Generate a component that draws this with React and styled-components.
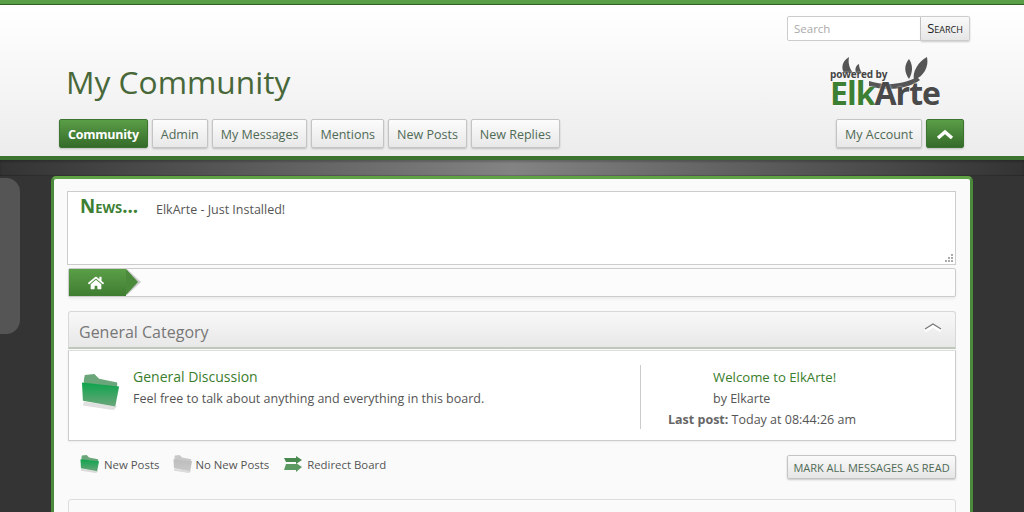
import React from 'react';
import styled, { createGlobalStyle } from 'styled-components';
import { FaHome } from 'react-icons/fa';

const GlobalStyle = createGlobalStyle`
  html, body {
    margin: 0;
    padding: 0;
    height: 100%;
    overflow: hidden;
    background: #333;
    font-family: "Open Sans", "Noto Sans", sans-serif;
    color: #555;
  }
  * { box-sizing: border-box; }
`;

const Page = styled.div`
  position: relative;
  height: 512px;
  overflow: hidden;
  background: #343434;
`;

const Header = styled.header`
  height: 160px;
  border-top: 4px solid #5a9e47;
  border-bottom: 4px solid #3d7330;
  background: linear-gradient(#fff, #fff 5px, #ececec);
  box-shadow: inset 0 1px 0 #2f5f22;
  padding: 12px 54px 0 59px;
  display: flex;
  flex-direction: column;
`;

const SearchRow = styled.div`
  display: flex;
  justify-content: flex-end;
`;

const SearchInput = styled.div`
  width: 134px;
  height: 25px;
  background: #fff;
  border: 1px solid #ccc;
  border-radius: 2px 0 0 2px;
  color: #aaa;
  font-size: 11.5px;
  line-height: 23px;
  padding-left: 6px;
`;

const SearchButton = styled.div`
  width: 49px;
  height: 25px;
  background: linear-gradient(#fafafa, #e6e6e6);
  border: 1px solid #ccc;
  border-left: none;
  border-radius: 0 2px 2px 0;
  box-shadow: 0 1px 2px rgba(0, 0, 0, 0.2);
  color: #222;
  font-size: 13px;
  font-variant: small-caps;
  line-height: 22px;
  text-align: center;
`;

const Brand = styled.div`
  display: flex;
  justify-content: space-between;
  align-items: flex-start;
  height: 78px;
  padding: 17px 29px 0 7px;
`;

const ForumName = styled.h1`
  margin: 0;
  font-size: 31.7px;
  line-height: 48px;
  font-weight: 400;
  color: #49683a;
`;

const Logo = styled.div`
  position: relative;
  width: 112px;
  height: 54px;
  margin-top: -2px;
`;

const Powered = styled.span`
  position: absolute;
  left: 1px;
  top: 12px;
  font-size: 10px;
  line-height: 12px;
  font-weight: 700;
  letter-spacing: -0.1px;
  color: #444;
  text-shadow: 0 0 2px #fff;
`;

const LogoWord = styled.span`
  position: absolute;
  left: 1px;
  top: 24px;
  font-size: 32px;
  line-height: 26px;
  font-weight: 700;
  letter-spacing: -1px;
  color: #4a4a4a;
  text-shadow: 0 0 2px #fff;
  white-space: nowrap;
`;

const Elk = styled.span`
  color: #3d7f33;
`;

const Antlers = styled.svg`
  position: absolute;
  left: 0;
  top: 0;
`;

const Nav = styled.nav`
  display: flex;
  justify-content: space-between;
  padding-right: 6px;
`;

const NavGroup = styled.div`
  display: flex;
  gap: 4px;
`;

const NavItem = styled.a`
  height: 29px;
  padding: 0 8px;
  border-radius: 2px;
  font-size: 12.5px;
  line-height: 29px;
  white-space: nowrap;
  color: ${(p) => (p.$active ? '#fff' : '#4f6a55')};
  font-weight: ${(p) => (p.$active ? 700 : 400)};
  letter-spacing: ${(p) => (p.$active ? '-0.25px' : '0')};
  border: 1px solid ${(p) => (p.$active ? '#3d7330' : '#c4c4c4')};
  background: ${(p) =>
    p.$active ? 'linear-gradient(#5a9e47, #356b2a)' : 'linear-gradient(#fcfcfc, #e8e8e8)'};
  box-shadow: 0 1px 2px rgba(0, 0, 0, 0.2);
`;

const ToggleButton = styled(NavItem)`
  width: 38px;
  padding: 0;
  display: flex;
  align-items: center;
  justify-content: center;
`;

const Glow = styled.div`
  height: 16px;
  background: linear-gradient(90deg, #333, #838383 50%, #333);
  box-shadow: inset 0 2px 2px rgba(0, 0, 0, 0.2), inset 0 -1px 1px rgba(0, 0, 0, 0.2);
`;

const SideTab = styled.div`
  position: absolute;
  left: 0;
  top: 178px;
  width: 20px;
  height: 156px;
  background: #555;
  border-radius: 0 14px 14px 0;
`;

const Wrapper = styled.main`
  margin: 0 51px;
  height: 340px;
  background: #fafafa;
  border: 3px solid #4a8a3a;
  border-top-color: #5fa345;
  border-bottom: none;
  border-radius: 5px 5px 0 0;
  padding: 12px 14px 0 13px;
`;

const NewsBox = styled.section`
  position: relative;
  height: 74px;
  background: #fff;
  border: 1px solid #ccc;
  display: flex;
  align-items: flex-start;
  padding: 4px 0 0 12px;
`;

const NewsTitle = styled.h2`
  margin: -1px 0 0;
  width: 76px;
  font-size: 18.7px;
  line-height: 22px;
  font-weight: 700;
  font-variant: small-caps;
  color: #3d7f33;
`;

const NewsText = styled.div`
  font-size: 12.5px;
  line-height: 20px;
  padding-top: 4px;
  color: #555;
`;

const Grip = styled.svg`
  position: absolute;
  right: 2px;
  bottom: 2px;
`;

const Breadcrumb = styled.div`
  height: 29px;
  margin: 3px 0 14px 1px;
  background: #fcfcfc;
  border: 1px solid #ccc;
  border-radius: 2px;
  box-shadow: 0 2px 3px rgba(0, 0, 0, 0.06);
  display: flex;
`;

const Crumb = styled.a`
  position: relative;
  width: 57px;
  height: 27px;
  background: linear-gradient(#5a9e47, #3f7d31);
  color: #fff;
  font-size: 16px;
  display: flex;
  align-items: center;
  justify-content: center;
  padding-right: 3px;

  &::before {
    content: '';
    position: absolute;
    left: 100%;
    top: 0;
    border-style: solid;
    border-width: 13.5px 0 13.5px 14px;
    border-color: transparent transparent transparent #ccc;
    margin-left: 1px;
  }

  &::after {
    content: '';
    position: absolute;
    left: 100%;
    top: 0;
    border-style: solid;
    border-width: 13.5px 0 13.5px 12px;
    border-color: transparent transparent transparent #4a8a3a;
  }
`;

const CategoryHeader = styled.div`
  height: 38px;
  margin-left: 1px;
  padding: 5px 13px 0 10px;
  background: linear-gradient(#f8f8f8, #e8e8e8);
  border: 1px solid #d8d8d8;
  border-bottom: 2px solid #c0c8bc;
  border-radius: 3px 3px 0 0;
  display: flex;
  align-items: center;
  justify-content: space-between;
  font-size: 16px;
  color: #777;
`;

const CollapseIcon = styled.svg`
  margin-top: -9px;
`;

const BoardRow = styled.div`
  height: 91px;
  margin: 1px 0 0 1px;
  background: #fff;
  border: 1px solid #ccc;
  border-top: 1px solid #ddd;
  box-shadow: 0 1px 2px rgba(0, 0, 0, 0.06);
  padding: 14px 0 0 12px;
  display: flex;
  align-items: flex-start;
`;

const BoardIcon = styled.div`
  width: 52px;
  flex: none;
  padding-top: 9px;
`;

const BoardInfo = styled.div`
  width: 507px;
  flex: none;
  padding-top: 1px;
`;

const BoardLink = styled.a`
  display: block;
  font-size: 14px;
  line-height: 22px;
  color: #3a7d2c;
`;

const BoardDesc = styled.p`
  margin: 0;
  font-size: 12.5px;
  line-height: 21px;
  color: #555;
`;

const LastPost = styled.div`
  flex: none;
  height: 64px;
  padding-left: 72px;
  border-left: 1px solid #ccc;
  font-size: 12.5px;
  line-height: 21px;
  color: #555;
`;

const PostTitle = styled.a`
  display: block;
  padding-top: 2px;
  font-size: 13.2px;
  line-height: 21px;
  color: #3a7d2c;
`;

const PostLine = styled.div`
  margin-left: ${(p) => (p.$outdent ? '-45px' : '0')};
  white-space: nowrap;
`;

const Strong = styled.strong`
  font-weight: 700;
  color: #666;
`;

const LegendBar = styled.div`
  display: flex;
  justify-content: space-between;
  align-items: flex-start;
  padding-left: 13px;
  height: 58px;
`;

const Legend = styled.div`
  display: flex;
  align-items: center;
  gap: 14px;
  height: 46px;
`;

const LegendItem = styled.span`
  display: flex;
  align-items: center;
  gap: ${(p) => (p.$tight ? '2px' : '4px')};
  font-size: 11.4px;
  color: #555;
  white-space: nowrap;
`;

const MarkButton = styled.a`
  margin-top: 14px;
  width: 169px;
  height: 24px;
  background: linear-gradient(#fafafa, #e6e6e6);
  border: 1px solid #c4c4c4;
  border-radius: 2px;
  box-shadow: 0 1px 2px rgba(0, 0, 0, 0.2);
  color: #4f6a55;
  font-size: 11px;
  line-height: 23px;
  text-align: center;
  white-space: nowrap;
`;

const NextPanel = styled.div`
  height: 30px;
  margin-left: 1px;
  background: #fafafa;
  border: 1px solid #ddd;
  border-radius: 3px 3px 0 0;
`;

function Folder({ width, color = '#0da44c', back = '#6aa67a' }) {
  const id = color.replace('#', 'f');
  return (
    <svg width={width} viewBox="0 0 42 38" style={{ display: 'block', flex: 'none' }}>
      <defs>
        <linearGradient id={id} x1="0" y1="0" x2="0" y2="1">
          <stop offset="0" stopColor={color} />
          <stop offset="1" stopColor={back} />
        </linearGradient>
      </defs>
      <path d="M2 33 L34 38 L38 34 L3 29 Z" fill="#000" opacity="0.12" />
      <path d="M3 6 L4 1 L14 0 L19 5 L38 9 L38 14 L3 10 Z" fill={back} />
      <path d="M1 9 L40 13 L36 34 L2 28 Z" fill={`url(#${id})`} />
    </svg>
  );
}

function RedirectIcon() {
  return (
    <svg width="20" height="17" viewBox="0 0 20 17" style={{ display: 'block' }}>
      <path d="M1 2 H13 V0 L19 4 L13 8 V6 H3 Z" fill="#4a8a50" />
      <path d="M3 8 H13 V7 L19 11 L13 16 V14 H1 Z" fill="#5d9a63" />
    </svg>
  );
}

function Chevron({ stroke = '#fff', width = 18, height = 10 }) {
  return (
    <svg width={width} height={height} viewBox="0 0 18 10">
      <path d="M2 9 L9 3 L16 9" fill="none" stroke={stroke} strokeWidth="3.4" />
    </svg>
  );
}

export default function App() {
  const links = ['Admin', 'My Messages', 'Mentions', 'New Posts', 'New Replies'];

  return (
    <Page>
      <GlobalStyle />
      <Header>
        <SearchRow>
          <SearchInput>Search</SearchInput>
          <SearchButton>Search</SearchButton>
        </SearchRow>
        <Brand>
          <ForumName>My Community</ForumName>
          <Logo>
            <Antlers width="112" height="54" viewBox="0 0 112 54">
              <path d="M20 1 C13 5 12 12 15 17 L24 17 C20 12 19 6 20 1 Z" fill="#555" />
              <path d="M30 8 C26 10 26 14 27 17 L33 17 C31 14 30 11 30 8 Z" fill="#555" />
              <path d="M98 1 C100 11 95 20 85 24 C83 16 89 6 98 1 Z" fill="#555" />
              <path d="M80 3 C75 9 75 16 80 23 C84 16 84 9 80 3 Z" fill="#555" />
              <path d="M40 25 C55 30 74 29 88 21 L91 24 C78 34 56 35 40 30 Z" fill="#555" />
            </Antlers>
            <Powered>powered by</Powered>
            <LogoWord>
              <Elk>Elk</Elk>Arte
            </LogoWord>
          </Logo>
        </Brand>
        <Nav>
          <NavGroup>
            <NavItem $active>Community</NavItem>
            {links.map((link) => (
              <NavItem key={link}>{link}</NavItem>
            ))}
          </NavGroup>
          <NavGroup>
            <NavItem>My Account</NavItem>
            <ToggleButton $active>
              <Chevron />
            </ToggleButton>
          </NavGroup>
        </Nav>
      </Header>
      <Glow />
      <SideTab />
      <Wrapper>
        <NewsBox>
          <NewsTitle>News...</NewsTitle>
          <NewsText>ElkArte - Just Installed!</NewsText>
          <Grip width="8" height="8" viewBox="0 0 8 8">
            <path d="M6 0h2v2H6zM3 3h2v2H3zM6 3h2v2H6zM0 6h2v2H0zM3 6h2v2H3zM6 6h2v2H6z" fill="#aaa" />
          </Grip>
        </NewsBox>
        <Breadcrumb>
          <Crumb>
            <FaHome />
          </Crumb>
        </Breadcrumb>
        <CategoryHeader>
          General Category
          <CollapseIcon width="18" height="12" viewBox="0 0 18 12">
            <path d="M1 9 L9 4 L17 9" fill="none" stroke="#fff" strokeWidth="3" />
            <path d="M1 7 L9 2 L17 7" fill="none" stroke="#777" strokeWidth="1.2" />
          </CollapseIcon>
        </CategoryHeader>
        <BoardRow>
          <BoardIcon>
            <Folder width={40} />
          </BoardIcon>
          <BoardInfo>
            <BoardLink>General Discussion</BoardLink>
            <BoardDesc>Feel free to talk about anything and everything in this board.</BoardDesc>
          </BoardInfo>
          <LastPost>
            <PostTitle>Welcome to ElkArte!</PostTitle>
            <PostLine>by Elkarte</PostLine>
            <PostLine $outdent>
              <Strong>Last post:</Strong> Today at 08:44:26 am
            </PostLine>
          </LastPost>
        </BoardRow>
        <LegendBar>
          <Legend>
            <LegendItem>
              <Folder width={20} />
              New Posts
            </LegendItem>
            <LegendItem $tight>
              <Folder width={20} color="#bdbdbd" back="#c8c8c8" />
              No New Posts
            </LegendItem>
            <LegendItem>
              <RedirectIcon />
              Redirect Board
            </LegendItem>
          </Legend>
          <MarkButton>MARK ALL MESSAGES AS READ</MarkButton>
        </LegendBar>
        <NextPanel />
      </Wrapper>
    </Page>
  );
}
